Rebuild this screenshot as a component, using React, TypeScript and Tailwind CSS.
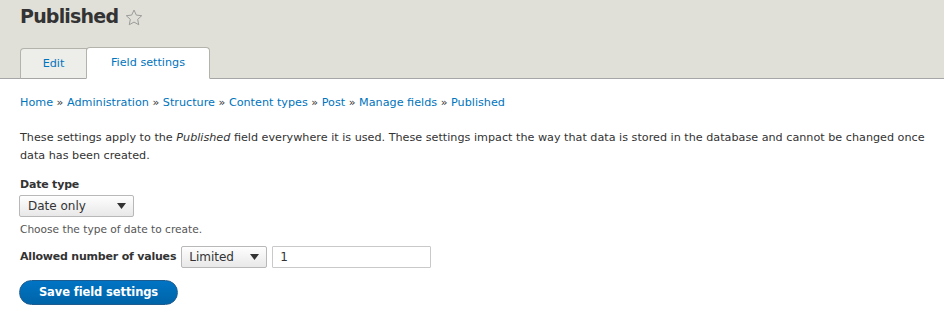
const crumbs = ["Home", "Administration", "Structure", "Content types", "Post", "Manage fields", "Published"];

const Caret = () => (
  <svg width="9" height="6" viewBox="0 0 9 6" className="shrink-0">
    <path d="M0 0h9L4.5 6z" fill="#333" />
  </svg>
);

export default function App() {
  return (
    <div className="w-[944px] h-[315px] bg-white text-[#333] text-[11.2px] font-['DejaVu_Sans',sans-serif] overflow-hidden">
      <header className="h-[79px] bg-[#e0e0d8] border-b border-[#a6a6a6] flex flex-col justify-between">
        <div className="flex items-center gap-[7px] pl-[20px] pt-[3px]">
          <h1 className="text-[19px] font-bold leading-[26px] text-[#333] tracking-[-0.8px]">Published</h1>
          <svg width="18" height="17" viewBox="0 0 20 19" className="mt-[2px]">
            <path
              d="M10 1.2l2.6 5.6 6 .7-4.5 4.1 1.2 6L10 14.6l-5.3 3 1.2-6L1.4 7.5l6-.7z"
              fill="none"
              stroke="#999"
              strokeWidth="1.1"
              strokeLinejoin="round"
            />
          </svg>
        </div>
        <nav className="flex items-end pl-[20px] -mb-px">
          <a className="h-[31px] w-[67px] flex items-center justify-center pt-[1px] bg-[#ededea] border border-[#b3b3ab] border-b-[#a6a6a6] rounded-tl-[4px] text-[#0074bd]">
            Edit
          </a>
          <a className="h-[32px] w-[124px] flex items-center justify-center pt-[1px] bg-white border border-[#b3b3ab] border-b-white rounded-t-[4px] text-[#0074bd] -ml-px">
            Field settings
          </a>
        </nav>
      </header>

      <main className="pl-[20px] pr-[12px]">
        <div className="pt-[15px] text-[#0074bd] leading-[18px]">
          {crumbs.map((c, i) => (
            <span key={c}>
              {i > 0 && <span className="text-[#333]"> » </span>}
              {c}
            </span>
          ))}
        </div>

        <p className="mt-[17px] leading-[18px]">
          These settings apply to the <em>Published</em> field everywhere it is used. These settings impact the way that
          data is stored in the database and cannot be changed once data has been created.
        </p>

        <div className="mt-[11px]">
          <label className="block font-bold text-[11px] tracking-[-0.2px] leading-[18px]">Date type</label>
          <div className="mt-[1px] -ml-px w-[115px] h-[22px] flex items-center justify-between pl-[8px] pr-[7px] border border-[#b8b8b8] rounded-[2px] bg-gradient-to-b from-[#fefefe] to-[#e8e8e8] text-[12px]">
            <span>Date only</span>
            <Caret />
          </div>
          <div className="mt-[4px] text-[10.6px] leading-[16px] text-[#555]">Choose the type of date to create.</div>
        </div>

        <div className="mt-[9px] flex items-center gap-[5px]">
          <label className="font-bold text-[11px] tracking-[-0.2px]">Allowed number of values</label>
          <div className="w-[86px] h-[22px] flex items-center justify-between pl-[7px] pr-[7px] border border-[#b8b8b8] rounded-[2px] bg-gradient-to-b from-[#fefefe] to-[#e8e8e8] text-[12px]">
            <span>Limited</span>
            <Caret />
          </div>
          <div className="w-[159px] h-[22px] flex items-center px-[7px] border border-[#c9c9c9] rounded-[1px] bg-white text-[12px]">
            1
          </div>
        </div>

        <button className="mt-[12px] -ml-px w-[159px] h-[25px] rounded-full bg-gradient-to-b from-[#0074c4] to-[#0064a8] border border-[#1e5c90] text-white font-bold text-[11.5px] tracking-[-0.1px]">
          Save field settings
        </button>
      </main>
    </div>
  );
}
